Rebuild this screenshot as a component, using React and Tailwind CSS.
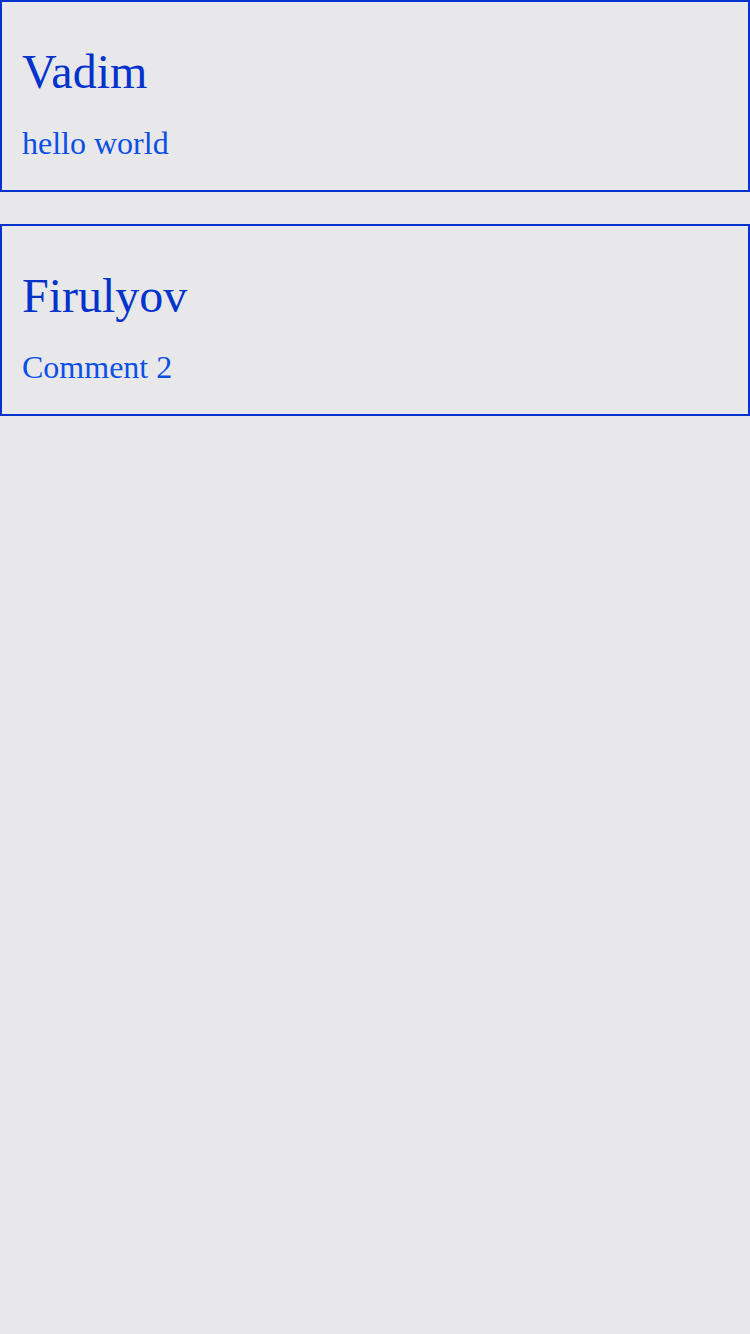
const comments = [
  { author: "Vadim", text: "hello world" },
  { author: "Firulyov", text: "Comment 2" },
];

function CommentCard({ author, text }) {
  return (
    <div className="flex flex-col gap-[31px] border-2 border-[#0033cc] px-5 pt-[46px] pb-[31px]">
      <h2 className="text-[48px] leading-[48px] text-[#0033cc]">{author}</h2>
      <p className="text-[32px] leading-[32px] text-[#0a4fe6]">{text}</p>
    </div>
  );
}

export default function App() {
  return (
    <div
      className="flex min-h-[1334px] w-[750px] flex-col gap-8 bg-[#e8e7ea]"
      style={{ fontFamily: '"Liberation Serif", serif' }}
    >
      {comments.map((c) => (
        <CommentCard key={c.author} {...c} />
      ))}
    </div>
  );
}
